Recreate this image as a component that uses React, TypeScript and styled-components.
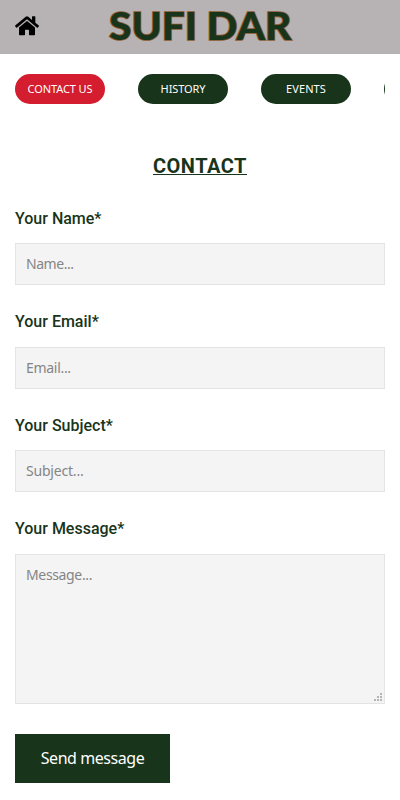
import React from "react";
import styled, { createGlobalStyle } from "styled-components";
import { FaHome } from "react-icons/fa";

const green = "#18341a";

const GlobalStyle = createGlobalStyle`
  *, *::before, *::after { box-sizing: border-box; }
  html, body { margin: 0; background: #fff; }
  body { font-family: "Noto Sans", sans-serif; overflow: hidden; }
`;

const Page = styled.div`
  height: 800px;
  overflow: hidden;
`;

const Header = styled.header`
  display: grid;
  grid-template-columns: 94px 1fr 94px;
  height: 54px;
  background: #b7b2b3;
`;

const HomeLink = styled.a`
  padding: 15px 0 0 15px;
  line-height: 0;
  color: #000;
  svg { width: 24px; height: 21.5px; }
`;

const Logo = styled.svg`
  display: block;
  width: 212px;
  height: 54px;
  text {
    font: 900 38.5px Lato, sans-serif;
    fill: ${green};
    stroke: #8d5a30;
    stroke-width: 1.7px;
    paint-order: stroke;
  }
`;

const Nav = styled.nav`
  display: flex;
  gap: 33px;
  margin: 20px 15px 0;
  overflow: hidden;
`;

const Pill = styled.a<{ $active?: boolean; $spacing?: number }>`
  flex: 0 0 90px;
  height: 30px;
  border-radius: 15px;
  background: ${(p) => (p.$active ? "#d41d2e" : green)};
  color: #fff;
  font-size: 11px;
  line-height: 30px;
  letter-spacing: ${(p) => p.$spacing ?? 0}px;
  text-align: center;
  white-space: nowrap;
`;

const Title = styled.h1`
  margin: 50px 0 0;
  color: ${green};
  font: 700 20px/24px Roboto, sans-serif;
  letter-spacing: 0.5px;
  text-align: center;
  text-decoration: underline;
  text-decoration-thickness: 1px;
  text-underline-offset: 1px;
  text-decoration-skip-ink: none;
`;

const Form = styled.form`
  display: flex;
  flex-direction: column;
  padding: 28.5px 15px 0;
`;

const Field = styled.label`
  display: block;
  height: 103.5px;
`;

const MessageField = styled(Field)`
  height: 217px;
`;

const Label = styled.span`
  display: block;
  height: 36.5px;
  color: ${green};
  font: 500 16px/24px Roboto, sans-serif;
`;

const Input = styled.input<{ $spacing: number }>`
  display: block;
  width: 100%;
  height: 42px;
  padding: 0 10px 1px;
  border: 1px solid #e4e4e4;
  border-radius: 0;
  background: #f4f4f4;
  font: 14px "Noto Sans", sans-serif;
  letter-spacing: ${(p) => p.$spacing}px;
  outline: none;
  &::placeholder { color: #858585; }
`;

const MessageBox = styled.div`
  position: relative;
`;

const TextArea = styled.textarea`
  display: block;
  width: 100%;
  height: 150px;
  padding: 10px;
  border: 1px solid #e4e4e4;
  background: #f4f4f4;
  font: 14px/20px "Noto Sans", sans-serif;
  letter-spacing: -0.35px;
  resize: none;
  outline: none;
  &::placeholder { color: #858585; }
`;

const Grip = styled.svg`
  position: absolute;
  right: 2px;
  bottom: 2px;
  width: 9px;
  height: 9px;
  fill: #b5b5b5;
`;

const Submit = styled.button`
  width: 155px;
  height: 49px;
  padding: 0 0 2px;
  border: 0;
  background: ${green};
  color: #fff;
  font: 16px "Noto Sans", sans-serif;
  letter-spacing: -0.45px;
`;

const links = [
  { text: "CONTACT US", spacing: -0.1, active: true },
  { text: "HISTORY", spacing: -0.1 },
  { text: "EVENTS", spacing: 0.1 },
];

const fields = [
  { name: "Name", spacing: -0.45 },
  { name: "Email", spacing: -0.3 },
  { name: "Subject", spacing: -0.2 },
];

export default function App() {
  return (
    <Page>
      <GlobalStyle />
      <Header>
        <HomeLink aria-label="Home"><FaHome preserveAspectRatio="none" /></HomeLink>
        <Logo viewBox="0 0 212 54" aria-label="SUFI DAR">
          <text x="15" y="39.7" textLength="182.5" lengthAdjust="spacingAndGlyphs">SUFI DAR</text>
        </Logo>
      </Header>
      <Nav>
        {links.map((l) => (
          <Pill key={l.text} $active={l.active} $spacing={l.spacing}>{l.text}</Pill>
        ))}
        <Pill />
      </Nav>
      <Title>CONTACT</Title>
      <Form>
        {fields.map((f) => (
          <Field key={f.name}>
            <Label>Your {f.name}*</Label>
            <Input placeholder={`${f.name}...`} $spacing={f.spacing} />
          </Field>
        ))}
        <MessageField>
          <Label>Your Message*</Label>
          <MessageBox>
            <TextArea placeholder="Message..." />
            <Grip viewBox="0 0 9 9">
              <path d="M6 0h2v2H6zM3 3h2v2H3zM6 3h2v2H6zM0 6h2v2H0zM3 6h2v2H3zM6 6h2v2H6z" />
            </Grip>
          </MessageBox>
        </MessageField>
        <Submit type="button">Send message</Submit>
      </Form>
    </Page>
  );
}
